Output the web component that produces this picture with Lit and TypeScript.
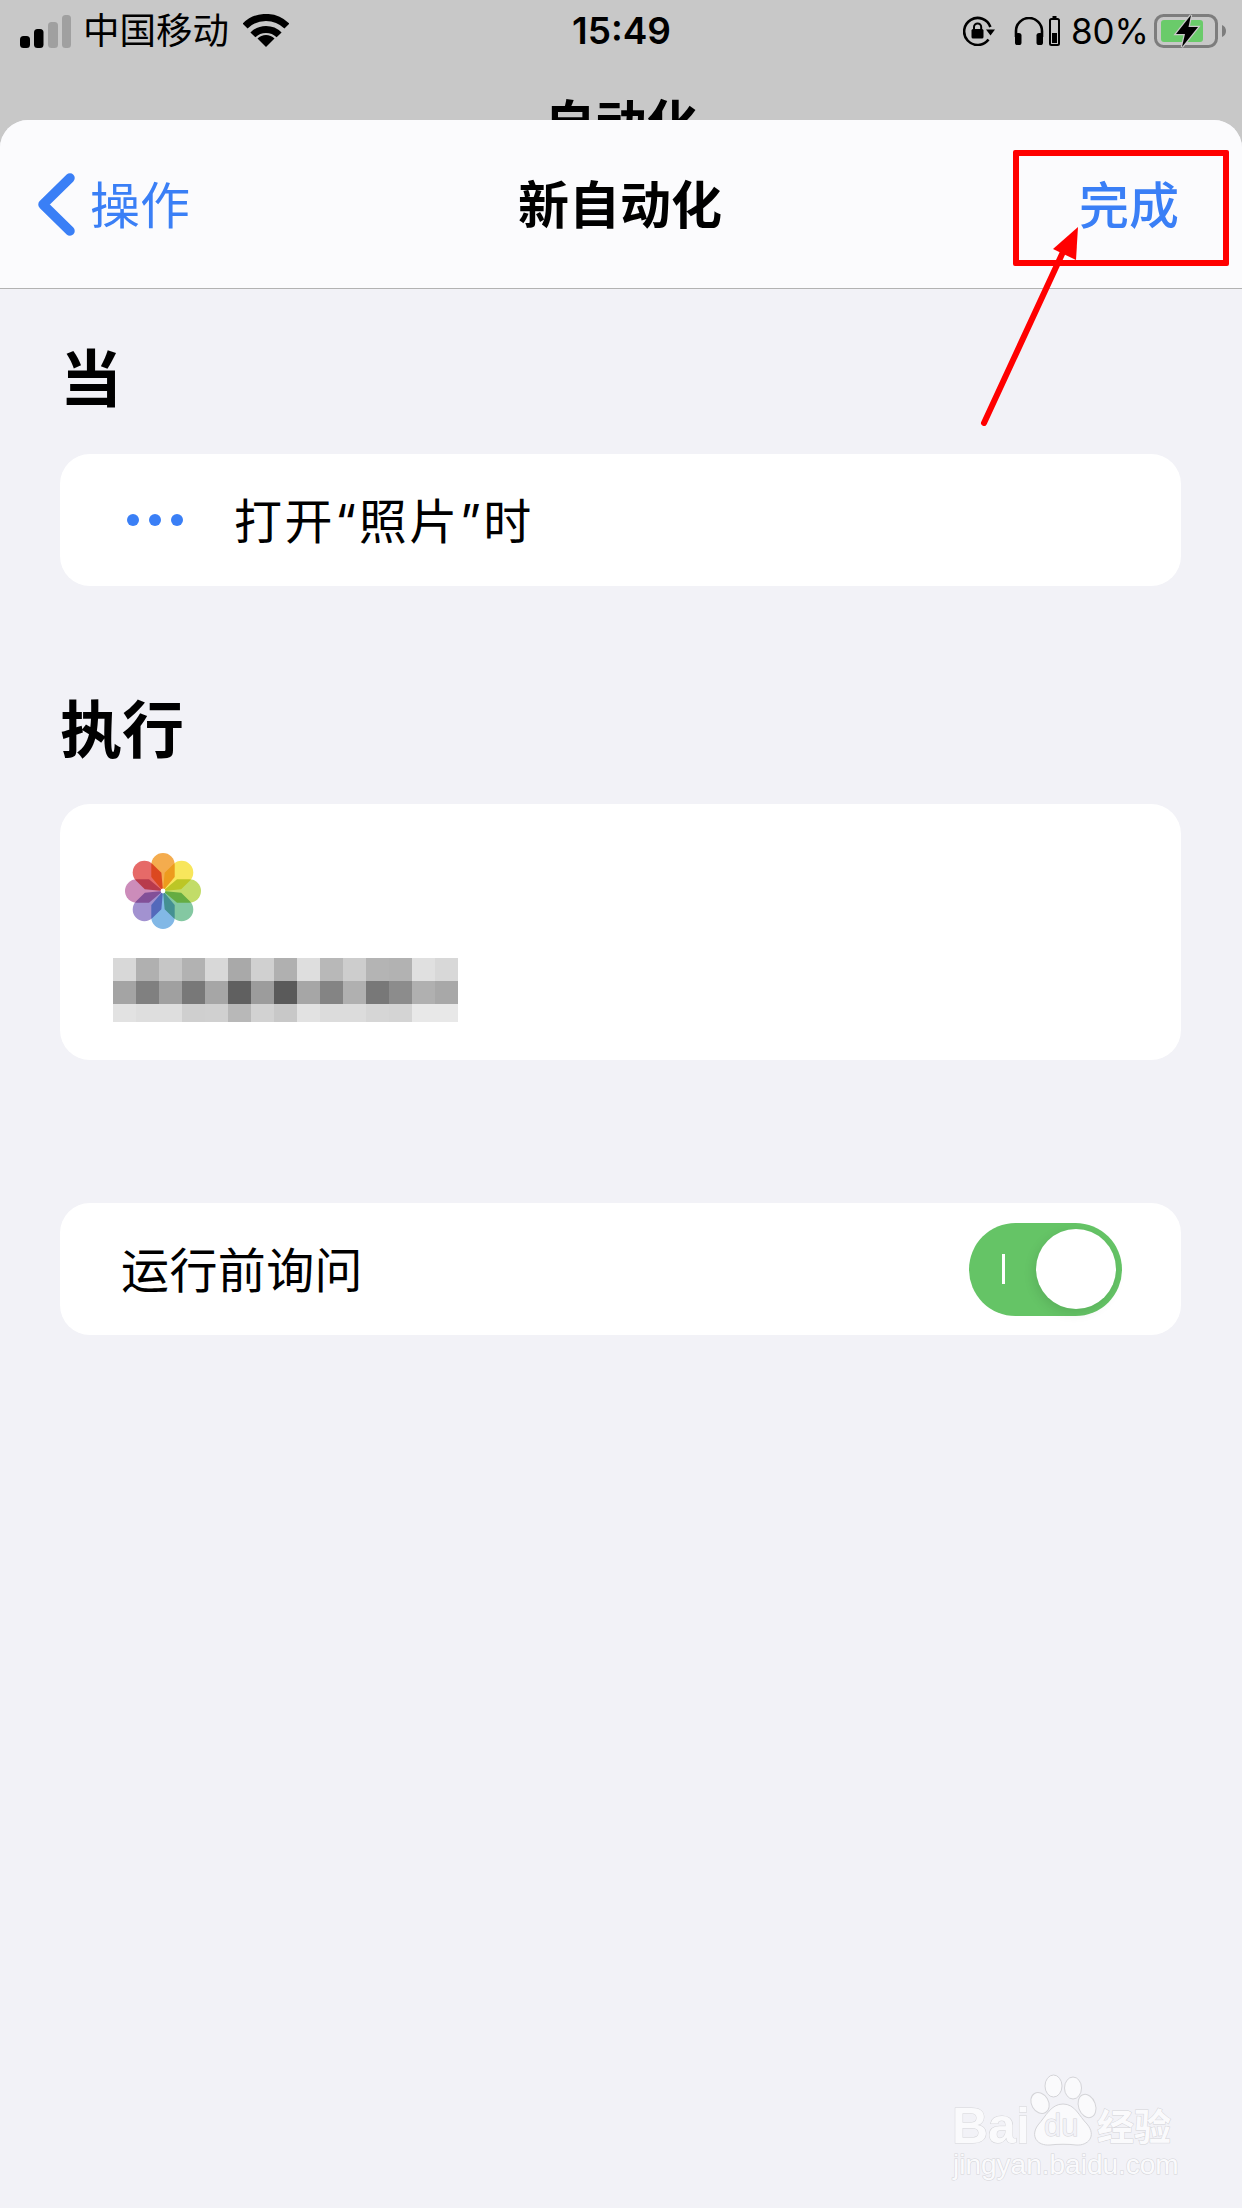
import { LitElement, html, css, svg } from 'lit';
import { customElement } from 'lit/decorators.js';

// blurred name, one list of greys per row
const BLUR_ROWS = [
  { h: 23, greys: [0xd8, 0xb0, 0xc6, 0xb2, 0xd8, 0xa9, 0xd0, 0xb0, 0xde, 0xb8, 0xcd, 0xb4, 0xb2, 0xe0, 0xd8] },
  { h: 23, greys: [0xa4, 0x80, 0xa0, 0x78, 0xa6, 0x60, 0x9c, 0x5a, 0xa6, 0x84, 0xb0, 0x78, 0x8c, 0xb0, 0xa8] },
  { h: 18, greys: [0xe2, 0xde, 0xde, 0xcf, 0xd0, 0xb8, 0xd2, 0xc8, 0xe2, 0xdc, 0xdc, 0xd6, 0xd4, 0xe8, 0xe8] },
];

const PETALS = ['#f4ac4e', '#f8e65c', '#c2dc68', '#84c8a2', '#82b8e6', '#a292d0', '#cc8cba', '#e66a68'];

@customElement('app-root')
export class AppRoot extends LitElement {
  static styles = css`
    :host {
      display: flex;
      flex-direction: column;
      position: relative;
      width: 1242px;
      height: 2208px;
      overflow: hidden;
      background: #c8c8c8;
      color: #000;
      font-family: 'Inter', 'Noto Sans CJK SC', sans-serif;
    }

    .backdrop {
      height: 120px;
      overflow: hidden;
      flex: none;
    }

    .status {
      display: grid;
      grid-template-columns: 1fr auto 1fr;
      align-items: center;
      height: 60px;
      padding: 0 16px 0 20px;
    }

    .status-left,
    .status-right {
      display: flex;
      align-items: center;
    }

    .status-right {
      justify-content: flex-end;
    }

    .carrier {
      margin: 0 14px 0 12px;
      font-size: 36.5px;
      line-height: 62px;
    }

    .time {
      margin-left: -3px;
      font-weight: 600;
      font-size: 37px;
      line-height: 62px;
    }

    .percent {
      margin: 0 5px 0 11px;
      font-size: 35px;
      line-height: 60px;
    }

    .small-gap {
      margin-left: 19px;
      margin-right: 5px;
    }

    .behind-title {
      margin-top: 40px;
      text-align: center;
      font-size: 51px;
      font-weight: 700;
      line-height: 50px;
    }

    .sheet {
      flex: 1;
      display: flex;
      flex-direction: column;
      background: #f2f2f7;
      border-radius: 28px 28px 0 0;
      overflow: hidden;
    }

    .nav {
      display: grid;
      grid-template-columns: 1fr auto 1fr;
      align-items: center;
      height: 163px;
      padding: 0 38px 5px;
      background: #fbfbfd;
      border-bottom: 1px solid #b2b2b2;
      font-size: 50px;
      flex: none;
    }

    .back {
      display: flex;
      align-items: center;
      gap: 15px;
      color: #3a7ff6;
    }

    .back svg {
      margin-top: 5px;
    }

    .title {
      margin-left: -2px;
      font-weight: 700;
      font-size: 51px;
    }

    .done {
      justify-self: end;
      margin-right: 25px;
      color: #3a7ff6;
      font-weight: 500;
    }

    .content {
      display: flex;
      flex-direction: column;
      padding: 0 61px 0 60px;
    }

    .heading {
      font-size: 62px;
      line-height: 60px;
      font-weight: 700;
    }

    .heading.when {
      margin: 61px 0 44px 0;
    }

    .heading.run {
      margin: 115px 0 43px 0;
    }

    .card {
      background: #fff;
      border-radius: 30px;
    }

    .trigger {
      display: flex;
      align-items: center;
      height: 132px;
      padding-left: 67px;
      font-size: 48px;
      font-feature-settings: 'palt';
      letter-spacing: 2.5px;
    }

    .trigger span,
    .ask span {
      margin-top: -5px;
    }

    .dots {
      display: flex;
      gap: 10px;
      margin-right: 51px;
    }

    .dots i {
      width: 12px;
      height: 12px;
      border-radius: 50%;
      background: #3a7ff6;
    }

    .action {
      display: flex;
      flex-direction: column;
      align-items: flex-start;
      padding: 49px 0 38px 53px;
    }

    .photos {
      margin: 0 0 29px 12px;
    }

    .blur-row {
      display: flex;
    }

    .blur-row i {
      width: 23px;
    }

    .ask {
      display: flex;
      align-items: center;
      justify-content: space-between;
      height: 132px;
      margin-top: 143px;
      padding: 0 59px 0 61px;
      font-size: 48px;
      letter-spacing: 0.4px;
    }

    .toggle {
      display: flex;
      align-items: center;
      justify-content: space-between;
      width: 153px;
      height: 93px;
      box-sizing: border-box;
      padding: 0 6px 0 33px;
      border-radius: 47px;
      background: #65c466;
    }

    .toggle i {
      width: 3px;
      height: 30px;
      background: #fff;
    }

    .toggle b {
      width: 80px;
      height: 80px;
      border-radius: 50%;
      background: #fff;
      box-shadow: -2px 4px 12px rgba(0, 0, 0, 0.1);
    }

    .callout {
      position: absolute;
      left: 1013px;
      top: 150px;
      width: 216px;
      height: 116px;
      box-sizing: border-box;
      border: 6px solid #ff0000;
      border-radius: 2px;
    }

    .arrow {
      position: absolute;
      left: 970px;
      top: 215px;
    }

    .watermark {
      position: absolute;
      left: 950px;
      top: 2070px;
    }

    .watermark text {
      fill: #fafafc;
      stroke: #d4d4d8;
      stroke-width: 1px;
      paint-order: stroke;
    }

    svg {
      display: block;
      flex: none;
    }
  `;

  signal() {
    return html`<svg width="51" height="33" viewBox="0 0 51 33">
      <rect x="0" y="21" width="10" height="12" rx="3.5" fill="#000" />
      <rect x="14" y="14" width="9.5" height="19" rx="3.5" fill="#000" />
      <rect x="28" y="7" width="10" height="26" rx="3.5" fill="#a0a0a0" />
      <rect x="42" y="0" width="9" height="33" rx="3.5" fill="#a0a0a0" />
    </svg>`;
  }

  wifi() {
    return html`<svg width="46" height="34" viewBox="0 0 46 34" fill="none" stroke="#000" stroke-width="7">
      <path d="M2.1 12.1A29.5 29.5 0 0 1 43.9 12.1" />
      <path d="M9.9 20.9A18.5 18.5 0 0 1 36.1 20.9" />
      <path d="M23 33L14.5 24.5A12 12 0 0 1 31.5 24.5Z" fill="#000" stroke="none" />
    </svg>`;
  }

  rotationLock() {
    return html`<svg width="32" height="30" viewBox="0 0 32 30" fill="none" stroke="#000" stroke-width="2.6">
      <path d="M25.5 23.5A13.5 13.5 0 1 1 27.4 11" />
      <path d="M23 13.5H32L27.5 19.5Z" fill="#000" stroke="none" />
      <path d="M11 13.5V11A3.6 3.6 0 0 1 18.2 11V13.5" stroke-width="2" />
      <rect x="8.5" y="13" width="12" height="9.5" rx="1.5" fill="#000" stroke="none" />
    </svg>`;
  }

  headphones() {
    return html`<svg width="30" height="28" viewBox="0 0 30 28" fill="none" stroke="#000" stroke-width="2.6">
      <path d="M2 20V14A13 13 0 0 1 28 14V20" />
      <rect x="1" y="16" width="6.5" height="12" rx="2.6" fill="#000" stroke="none" />
      <rect x="22.5" y="16" width="6.5" height="12" rx="2.6" fill="#000" stroke="none" />
    </svg>`;
  }

  podBattery() {
    return html`<svg width="11" height="30" viewBox="0 0 11 30">
      <rect x="3.5" y="0" width="4" height="3" fill="#000" />
      <rect x="1" y="3" width="9" height="26" rx="1.5" fill="none" stroke="#000" stroke-width="2" />
      <rect x="3" y="17" width="5" height="10" fill="#000" />
    </svg>`;
  }

  battery() {
    return html`<svg width="72" height="34" viewBox="0 0 72 34">
      <rect x="1.5" y="1.5" width="61" height="31" rx="8" fill="none" stroke="#7d7d7d" stroke-width="3" />
      <path d="M68 11C70.5 12 72 14 72 17S70.5 22 68 23Z" fill="#7d7d7d" />
      <rect x="7" y="6" width="42" height="22" rx="3" fill="#6acb6a" />
      <path
        d="M37 1L22 20H31L28 33L44 13H34.5Z"
        fill="#000"
        stroke="#c8c8c8"
        stroke-width="2.5"
        paint-order="stroke"
      />
    </svg>`;
  }

  photosIcon() {
    return html`<svg class="photos" width="76" height="76" viewBox="-38 -38 76 76" style="isolation:isolate">
      ${PETALS.map(
        (c, i) => svg`<path
          d="M0 0L-11.7 -14V-26.3A11.7 11.7 0 0 1 11.7 -26.3V-14Z"
          fill=${c}
          transform="rotate(${i * 45})"
          style="mix-blend-mode:multiply"
        />`
      )}
      <circle r="2.4" fill="#fff" />
    </svg>`;
  }

  watermark() {
    return html`<svg class="watermark" width="240" height="115" viewBox="950 2070 240 115">
      <g fill="#fafafc" stroke="#d4d4d8" stroke-width="1">
        <ellipse cx="1053.5" cy="2086" rx="8.5" ry="11" />
        <ellipse cx="1073" cy="2088" rx="8.5" ry="11" />
        <ellipse cx="1087" cy="2106" rx="8.5" ry="12" transform="rotate(-20 1087 2106)" />
        <ellipse cx="1040" cy="2103" rx="8.5" ry="11" transform="rotate(-30 1040 2103)" />
        <path
          d="M1063 2104C1075 2104 1079 2116 1087 2124C1097 2136 1088 2146 1076 2145C1069 2144 1057 2144 1050 2145C1037 2146 1030 2136 1038 2125C1046 2116 1051 2104 1063 2104Z"
        />
      </g>
      <text x="952" y="2143" font-family="Liberation Sans" font-weight="700" font-size="50">Bai</text>
      <text x="1044" y="2136" font-family="Liberation Sans" font-size="31" style="fill:#f2f2f7">du</text>
      <text x="1097" y="2141" font-family="Noto Sans CJK SC" font-weight="700" font-size="37">经验</text>
      <text x="953" y="2174" font-family="Liberation Sans" font-size="28">jingyan.baidu.com</text>
    </svg>`;
  }

  render() {
    return html`
      <div class="backdrop">
        <div class="status">
          <div class="status-left">
            ${this.signal()}
            <span class="carrier">中国移动</span>
            ${this.wifi()}
          </div>
          <span class="time">15:49</span>
          <div class="status-right">
            ${this.rotationLock()}
            <span class="small-gap">${this.headphones()}</span>
            ${this.podBattery()}
            <span class="percent">80%</span>
            ${this.battery()}
          </div>
        </div>
        <div class="behind-title">自动化</div>
      </div>

      <div class="sheet">
        <div class="nav">
          <div class="back">
            <svg width="37" height="63" viewBox="0 0 37 63" fill="none" stroke="currentColor" stroke-width="9.5" stroke-linecap="round" stroke-linejoin="round">
              <path d="M32 5L5 31.5L32 58" />
            </svg>
            <span>操作</span>
          </div>
          <div class="title">新自动化</div>
          <div class="done">完成</div>
        </div>

        <div class="content">
          <div class="heading when">当</div>
          <div class="card trigger">
            <div class="dots"><i></i><i></i><i></i></div>
            <span>打开“照片”时</span>
          </div>

          <div class="heading run">执行</div>
          <div class="card action">
            ${this.photosIcon()}
            <div>
              ${BLUR_ROWS.map(
                (row) => html`<div class="blur-row" style="height:${row.h}px">
                  ${row.greys.map((g) => html`<i style="background:rgb(${g},${g},${g})"></i>`)}
                </div>`
              )}
            </div>
          </div>

          <div class="card ask">
            <span>运行前询问</span>
            <div class="toggle"><i></i><b></b></div>
          </div>
        </div>
      </div>

      <div class="callout"></div>
      <svg class="arrow" width="120" height="220" viewBox="970 215 120 220">
        <path d="M984 423L1063 252" fill="none" stroke="#ff0000" stroke-width="6" stroke-linecap="round" />
        <path d="M1078 227L1053 249L1076 260Z" fill="#ff0000" />
      </svg>
      ${this.watermark()}
    `;
  }
}
